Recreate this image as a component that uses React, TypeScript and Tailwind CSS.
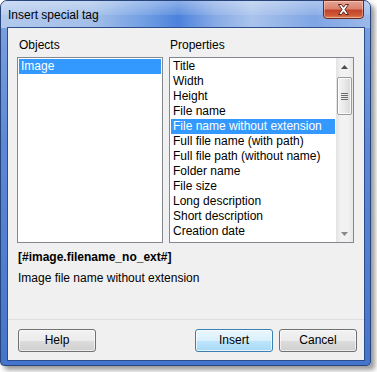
const OBJECTS = ["Image"];

const PROPERTIES = [
  "Title",
  "Width",
  "Height",
  "File name",
  "File name without extension",
  "Full file name (with path)",
  "Full file path (without name)",
  "Folder name",
  "File size",
  "Long description",
  "Short description",
  "Creation date",
];

function Row({ text, selected }: { text: string; selected?: boolean }) {
  return (
    <div
      className={
        "h-[15px] leading-[15px] px-[2px] whitespace-nowrap " +
        (selected ? "bg-[#3399ff] text-white" : "text-black")
      }
    >
      {text}
    </div>
  );
}

function Button({ label, primary }: { label: string; primary?: boolean }) {
  return (
    <button
      className={
        "w-[78px] h-[23px] rounded-[3px] border text-[12px] leading-[21px] text-black " +
        (primary
          ? "border-[#3c7fb1] bg-[linear-gradient(to_bottom,#eaf6fd_0%,#d9f0fc_50%,#bee6fd_51%,#a7d9f5_100%)] shadow-[inset_0_0_0_1px_rgba(255,255,255,0.7)]"
          : "border-[#707070] bg-[linear-gradient(to_bottom,#f2f2f2_0%,#ebebeb_50%,#dddddd_51%,#cfcfcf_100%)] shadow-[inset_0_0_0_1px_rgba(255,255,255,0.6)]")
      }
    >
      {label}
    </button>
  );
}

function ScrollBar() {
  return (
    <div className="w-[17px] h-full flex flex-col bg-[linear-gradient(to_right,#e3e3e3,#f2f2f2_30%,#f2f2f2_70%,#e6e6e6)]">
      {/* up arrow */}
      <div className="h-[17px] flex items-center justify-center">
        <svg width="7" height="4" viewBox="0 0 7 4">
          <path d="M0 4 L3.5 0 L7 4 Z" fill="#4d4d4d" />
        </svg>
      </div>
      {/* thumb */}
      <div className="mx-[1px] mt-[2px] h-[38px] rounded-[2px] border border-[#9a9a9a] bg-[linear-gradient(to_right,#f4f4f4,#e9e9e9_50%,#d8d8d8)] shadow-[inset_0_0_0_1px_rgba(255,255,255,0.8)] flex flex-col items-center justify-center gap-[1px]">
        <div className="w-[7px] h-[1px] bg-[#6d6d6d]" />
        <div className="w-[7px] h-[1px] bg-[#6d6d6d]" />
        <div className="w-[7px] h-[1px] bg-[#6d6d6d]" />
        <div className="w-[7px] h-[1px] bg-[#6d6d6d]" />
      </div>
      <div className="flex-1" />
      {/* down arrow */}
      <div className="h-[17px] flex items-center justify-center">
        <svg width="7" height="4" viewBox="0 0 7 4">
          <path d="M0 0 L7 0 L3.5 4 Z" fill="#8a8a8a" />
        </svg>
      </div>
    </div>
  );
}

export default function App() {
  return (
    <div className="w-[377px] h-[372px] bg-white font-['Liberation_Sans',Arial,sans-serif] text-[12px] text-black">
      <div className="relative w-[371px] h-[366px] rounded-t-[7px] rounded-b-[4px] border border-[#27457a] bg-[linear-gradient(to_bottom,#7fa4e0,#5b88d6_40%,#4574cc)] shadow-[4px_4px_5px_rgba(0,0,0,0.4)] flex flex-col pl-[6px] pr-[5px] pb-[4px]">
        {/* title bar */}
        <div className="absolute inset-x-0 top-0 h-[27px] rounded-t-[6px] bg-[linear-gradient(to_right,#b2c9ec_0%,#a3bfe9_25%,#6c9be3_40%,#4c82dc_48%,#87aae6_58%,#a9c3ec_68%,#7fa5e4_85%,#9cb9e9_100%)]" />
        <div className="absolute inset-x-0 top-0 h-[14px] rounded-t-[6px] bg-[linear-gradient(to_bottom,rgba(255,255,255,0.35),rgba(255,255,255,0.1))]" />
        <div className="relative h-[26px] flex items-center pl-[1px] pt-[2px] text-[12px] text-black">
          Insert special tag
        </div>

        {/* close button */}
        <div className="absolute right-[6px] top-[-1px] w-[41px] h-[19px] rounded-b-[4px] border border-[#6b2a1d] bg-[linear-gradient(to_bottom,#e8a393_0%,#d98370_45%,#c4442a_55%,#cf5a38_85%,#e08a5d_100%)] shadow-[inset_0_0_0_1px_rgba(255,255,255,0.35)] flex items-center justify-center">
          <svg width="13" height="11" viewBox="0 0 13 11">
            <path
              d="M1.5 0.5 H4.5 L6.5 3.2 L8.5 0.5 H11.5 L8 5.5 L11.5 10.5 H8.5 L6.5 7.8 L4.5 10.5 H1.5 L5 5.5 Z"
              fill="#ffffff"
              stroke="#5a2219"
              strokeWidth="1"
              strokeLinejoin="round"
            />
          </svg>
        </div>

        {/* client area */}
        <div className="relative flex-1 border border-[#2b4d8c] bg-[#f0f0f0] flex flex-col">
          <div className="flex gap-[6px] pl-[9px] pr-[10px] pt-[10px]">
            <div className="w-[146px] flex flex-col">
              <div className="h-[15px] leading-[15px] pl-[2px] mb-[4px]">Objects</div>
              <div className="h-[186px] border border-[#828790] bg-white p-[1px]">
                {OBJECTS.map((o) => (
                  <Row key={o} text={o} selected />
                ))}
              </div>
            </div>
            <div className="w-[185px] flex flex-col">
              <div className="h-[15px] leading-[15px] pl-[1px] mb-[4px]">Properties</div>
              <div className="h-[186px] border border-[#828790] bg-white flex">
                <div className="flex-1 pt-[1px] pl-[1px] pr-[1px]">
                  {PROPERTIES.map((p) => (
                    <Row key={p} text={p} selected={p === "File name without extension"} />
                  ))}
                </div>
                <ScrollBar />
              </div>
            </div>
          </div>

          <div className="mt-[7px] pl-[10px] h-[15px] leading-[15px] font-bold">
            [#image.filename_no_ext#]
          </div>
          <div className="mt-[6px] pl-[10px] h-[15px] leading-[15px]">
            Image file name without extension
          </div>

          <div className="flex-1" />

          <div className="border-t border-[#dfdfdf] flex items-center pl-[10px] pr-[7px] pt-[9px] pb-[8px]">
            <Button label="Help" />
            <div className="flex-1" />
            <div className="flex gap-[6px]">
              <Button label="Insert" primary />
              <Button label="Cancel" />
            </div>
          </div>
        </div>
      </div>
    </div>
  );
}
